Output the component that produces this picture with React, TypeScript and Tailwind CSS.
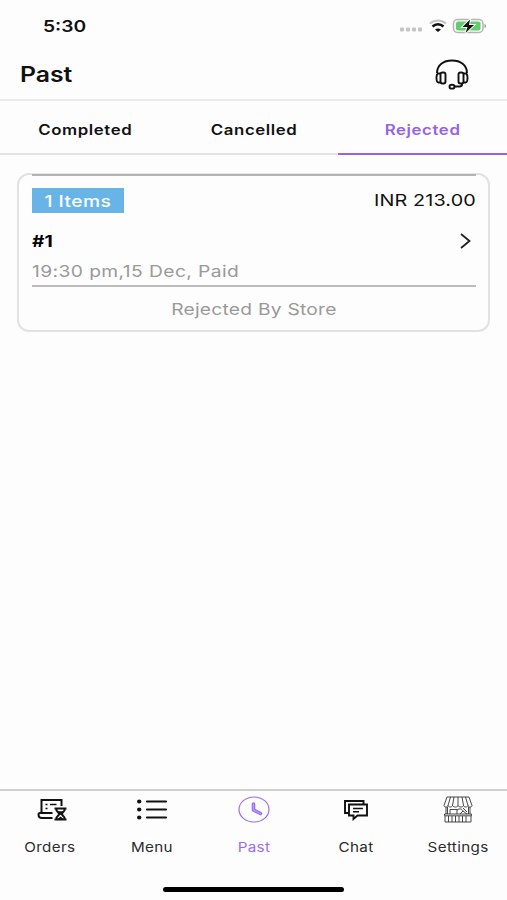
import type { ReactNode } from "react"

const tabs = [
  { label: "Completed", active: false },
  { label: "Cancelled", active: false },
  { label: "Rejected", active: true },
]

function OrdersIcon() {
  return (
    <svg width="30" height="24" viewBox="0 0 30 24" fill="none" stroke="#111" strokeWidth="2" className="ml-[3px] mt-[2px]">
      <path d="M4.500 14.500V2H24.500v6M15.500 15H3C1.800 15 1.500 15.500 1.500 16.500 1.500 19 3 20 5 20H15.500" />
      <path d="M8.500 6.500h2M13 6.500h6.500M8.500 10.500h2" strokeWidth="1.700" />
      <path d="M17.500 10.500h12M17.500 21.500h12" />
      <path d="M19.500 11v1.500l3 3.500-3 3.500V21M27.500 11v1.500l-3 3.500 3 3.500V21" strokeWidth="2" />
      <path d="M20.500 13.200h6l-3 3.300zM20.500 21l3-2.500 3 2.500z" fill="#111" stroke="none" />
    </svg>
  )
}

function MenuIcon() {
  return (
    <svg width="32" height="24" viewBox="0 0 32 24" fill="none" stroke="#111" strokeWidth="2.200" strokeLinecap="round" className="mt-[2px]">
      <path d="M11 3.500h19M11 11.500h19M11 19.500h19" />
      <g fill="#111" stroke="none">
        <ellipse cx="3.200" cy="3.500" rx="2.200" ry="1.900" />
        <ellipse cx="3.200" cy="11.500" rx="2.200" ry="1.900" />
        <ellipse cx="3.200" cy="19.500" rx="2.200" ry="1.900" />
      </g>
    </svg>
  )
}

function PastIcon() {
  return (
    <svg width="32" height="27" viewBox="0 0 32 27" fill="none" stroke="#9a6cf0">
      <ellipse cx="16" cy="13.500" rx="15" ry="12.500" strokeWidth="1.200" />
      <path d="M15.500 8v6l7 3.500" strokeWidth="3.600" strokeLinecap="round" strokeLinejoin="round" />
      <path d="M15.500 8v6l7 3.500" stroke="#bd9cf7" strokeWidth="1.200" strokeLinecap="round" />
    </svg>
  )
}

function ChatIcon() {
  return (
    <svg width="26" height="22" viewBox="0 0 26 22" fill="none" stroke="#111" strokeWidth="1.900" className="mt-[2px]">
      <path d="M6 14H2V2h18.500v3" />
      <path d="M6 5.500h18V16.500H14.500L10.500 20V16.500H6z" />
      <path d="M10 9.500h10M10 12.700h6" strokeWidth="1.500" />
    </svg>
  )
}

function StoreIcon() {
  return (
    <svg width="30" height="27" viewBox="0 0 30 27" fill="none" stroke="#333" strokeWidth="0.900">
      <path d="M4 1h22l3 8.500c0 2-3.500 2-4 0-.5 2-4 2-4.500 0-.5 2-4.500 2-5.500 0-.5 2-4.500 2-5.500 0-.5 2-4 2-4.500 0-.5 2-4 2-4 0z" />
      <path d="M7.500 1L5 9.500M11 1L9.500 9.500M15 1v8.500M19 1l1.500 8.500M22.500 1L25 9.500" />
      <path d="M3 11v7M27 11v7M4.500 11v7M25.500 11v7" />
      <path d="M7 18v-4.500h7V18M14 14c3-2 5-1 6 1M17 18l3-3 4 3M20 12l4 4" />
      <path d="M1.500 18h27v1.800h-27zM2 20v6h26v-6" />
      <path d="M5.500 20v6M9 20v6M12.500 20v6M16 20v6M19.500 20v6M23 20v6" />
    </svg>
  )
}

function HeadsetIcon() {
  return (
    <svg width="34" height="32" viewBox="0 0 34 32" fill="none" stroke="#111" strokeWidth="1.900">
      <path d="M2 14C2 6 8.500 1.500 17 1.500S32 6 32 14" />
      <rect x="5.500" y="13.500" width="5" height="11" rx="2" />
      <rect x="23.500" y="13.500" width="5" height="11" rx="2" />
      <path d="M5.500 14.500H3.500C2 14.500 1.500 16 1.500 19s.5 4.500 2 4.500h2M28.500 14.500h2c1.500 0 2 1.500 2 4.500s-.5 4.500-2 4.500h-2" />
      <path d="M27 24.500v1c0 1.500-1 2-2.500 2H19.500" />
      <ellipse cx="17" cy="27.700" rx="2.500" ry="1.900" />
    </svg>
  )
}

function StatusIcons() {
  return (
    <svg width="88" height="20" viewBox="0 0 88 20" fill="none" className="mb-[2px]">
      <g fill="#c4c4c4">
        <rect x="1" y="12.500" width="4" height="4" rx="1" />
        <rect x="7" y="12.500" width="4" height="4" rx="1" />
        <rect x="13" y="12.500" width="4" height="4" rx="1" />
        <rect x="19" y="12.500" width="4" height="4" rx="1" />
      </g>
      <path d="M31 8.500c4.500-4 11.500-4 16 0" stroke="#c4c4c4" strokeWidth="2" />
      <path d="M33.500 11.500c3.200-3 7.800-3 11 0" stroke="#111" strokeWidth="2.500" />
      <path d="M36 14.500c1.800-1.500 4.200-1.500 6 0L39 17z" fill="#111" />
      <rect x="54.500" y="4.500" width="29.500" height="13" rx="4" stroke="#b5b5b5" strokeWidth="1.500" />
      <rect x="57" y="6.500" width="24.500" height="9" rx="2" fill="#61cd6c" />
      <path d="M85.500 9v4c2-.5 2-3.500 0-4z" fill="#999" />
      <path
        d="M71 4.500l-7.500 7.500h5l-2 6 8.500-8h-5z"
        fill="#111"
        stroke="#fff"
        strokeWidth="2"
        paintOrder="stroke"
      />
    </svg>
  )
}

interface NavItemProps {
  label: string
  active?: boolean
  children: ReactNode
}

function NavItem({ label, active, children }: NavItemProps) {
  return (
    <button className={`flex flex-col items-center flex-1 ${active ? "text-[#9a6cf0]" : "text-[#2b2b2b]"}`}>
      <span className="flex items-center justify-center h-9">{children}</span>
      <span className="mt-[11px] text-[13px] leading-[19px] tracking-[0.3px] scale-x-[1.17]">{label}</span>
    </button>
  )
}

export default function App() {
  return (
    <div className="flex flex-col w-full h-[900px] bg-[#fdfdfd] text-[#111] font-['Inter',sans-serif] overflow-hidden">
      <div className="flex items-center justify-between h-[51px] pl-[43px] pr-5">
        <span className="text-base font-semibold origin-left scale-x-[1.2]">5:30</span>
        <StatusIcons />
      </div>

      <header className="flex items-center justify-between h-[50px] pl-5 pr-[38px] border-b-2 border-[#ebebeb]">
        <h1 className="text-[21px] font-semibold origin-left scale-x-[1.18]">Past</h1>
        <HeadsetIcon />
      </header>

      <div className="flex h-[54px]">
        {tabs.map((tab) => (
          <button
            key={tab.label}
            className={`flex items-center justify-center flex-1 pt-[5px] pl-px text-sm font-semibold border-b-2 ${
              tab.active ? "text-[#9563e8] border-[#9563e8]" : "border-[#e3e3e3]"
            }`}
          >
            <span className="tracking-[0.5px] scale-x-[1.2]">{tab.label}</span>
          </button>
        ))}
      </div>

      <main className="flex-1 pt-[18px] px-[17px]">
        <div className="h-[159px] pl-[13px] pr-3 border-2 border-[#e2e2e2] rounded-[12px]">
          <div className="h-[2px] -mt-px bg-[#b5b5b5]" />
          <div className="flex items-center justify-between h-[26px] mt-[11px]">
            <span className="flex items-center justify-center w-[92px] h-[25px] pt-px bg-[#68b4e7] text-white">
              <span className="text-base font-medium tracking-[0.4px] scale-x-[1.2]">1 Items</span>
            </span>
            <span className="pt-px text-[16.5px] tracking-[0.1px] origin-right scale-x-[1.2]">INR 213.00</span>
          </div>
          <div className="flex items-center justify-between h-7 mt-[14px]">
            <span className="text-base font-bold text-black origin-left scale-x-[1.2]">#1</span>
            <svg width="14" height="18" viewBox="0 0 14 18" fill="none" stroke="#222" strokeWidth="1.800" className="mr-[3px]">
              <path d="M2 2l8.500 7L2 16" />
            </svg>
          </div>
          <div className="flex items-center h-8 pt-px border-b-2 border-[#bdbdbd] text-[#999]">
            <span className="text-base tracking-[0.35px] origin-left scale-x-[1.2]">19:30 pm,15 Dec, Paid</span>
          </div>
          <div className="flex items-center justify-center h-[43px] text-[#999]">
            <span className="text-base tracking-[0.2px] scale-x-[1.2]">Rejected By Store</span>
          </div>
        </div>
      </main>

      <nav className="flex items-start h-[111px] -ml-px -mr-0.5 border-t-2 border-[#cfcfcf]">
        <NavItem label="Orders"><OrdersIcon /></NavItem>
        <NavItem label="Menu"><MenuIcon /></NavItem>
        <NavItem label="Past" active><PastIcon /></NavItem>
        <NavItem label="Chat"><ChatIcon /></NavItem>
        <NavItem label="Settings"><StoreIcon /></NavItem>
      </nav>
      <div className="absolute left-[163px] top-[887px] w-[181px] h-[5px] rounded-full bg-black" />
    </div>
  )
}
